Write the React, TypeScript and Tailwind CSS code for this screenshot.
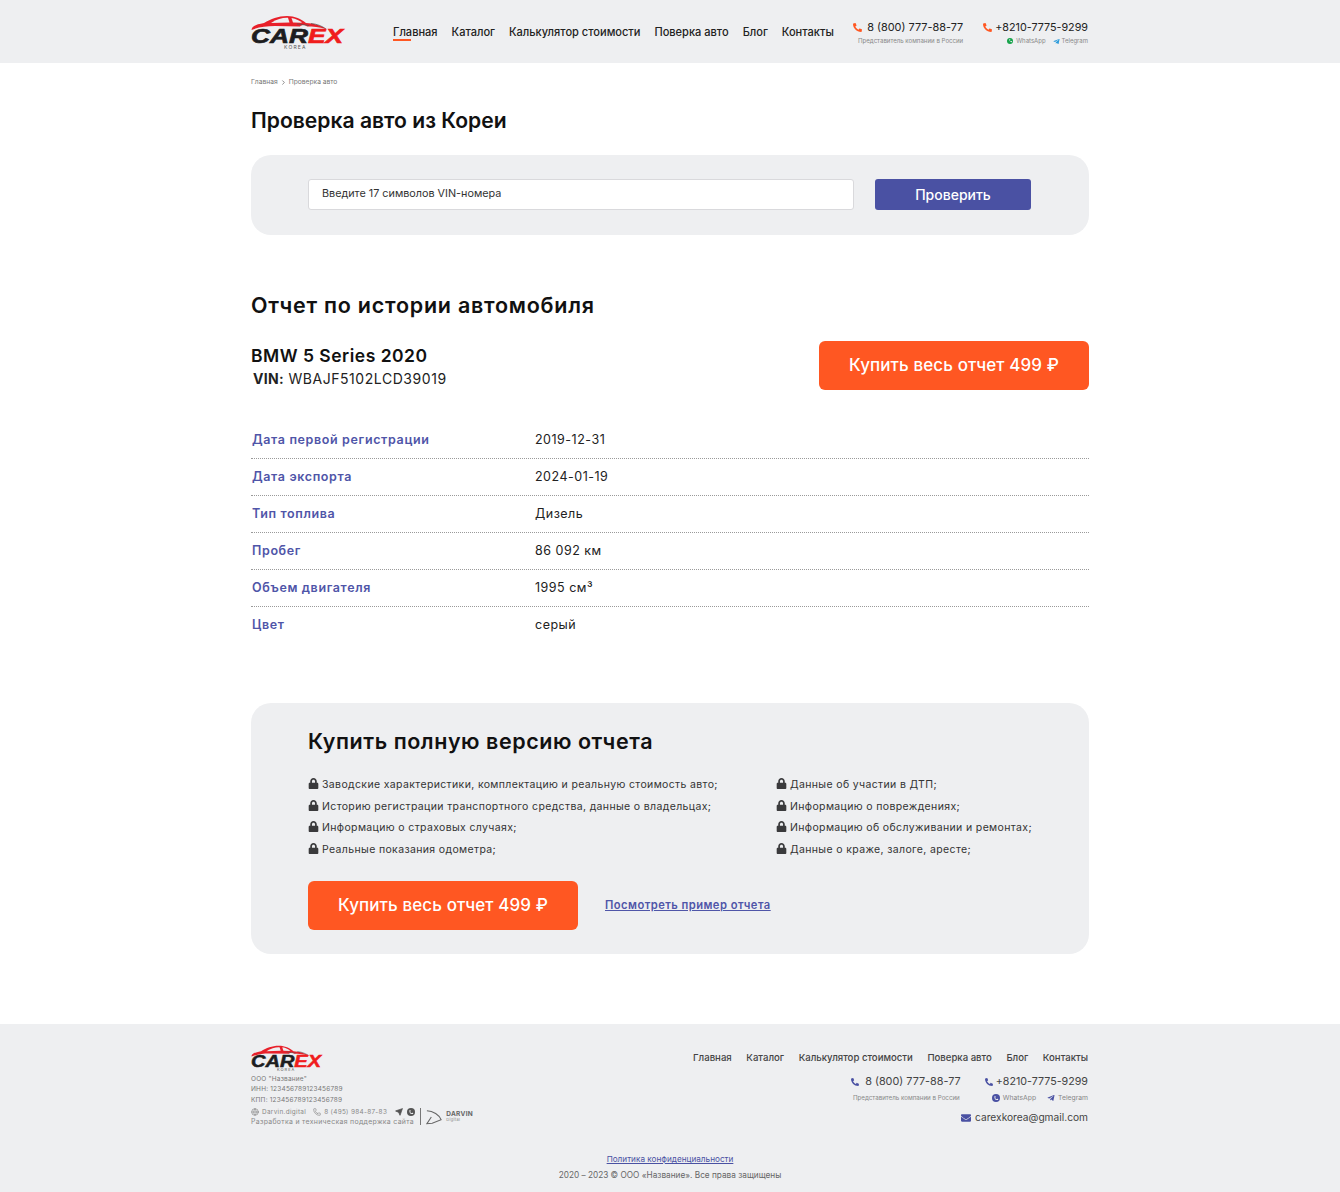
import { Phone, Send, Globe, ChevronRight } from "lucide-react";
import { FaLock, FaEnvelope, FaPhone, FaTelegramPlane } from "react-icons/fa";

const navItems = ["Главная", "Каталог", "Калькулятор стоимости", "Поверка авто", "Блог", "Контакты"];

const rows = [
  ["Дата первой регистрации", "2019-12-31"],
  ["Дата экспорта", "2024-01-19"],
  ["Тип топлива", "Дизель"],
  ["Пробег", "86 092 км"],
  ["Объем двигателя", "1995 см³"],
  ["Цвет", "серый"],
];

const leftItems = [
  "Заводские характеристики, комплектацию и реальную стоимость авто;",
  "Историю регистрации транспортного средства, данные о владельцах;",
  "Информацию о страховых случаях;",
  "Реальные показания одометра;",
];

const rightItems = [
  "Данные об участии в ДТП;",
  "Информацию о повреждениях;",
  "Информацию об обслуживании и ремонтах;",
  "Данные о краже, залоге, аресте;",
];

function Logo({ small }: { small?: boolean }) {
  return (
    <div className={small ? "relative h-[26px] w-[71px] shrink-0" : "relative h-[33px] w-[92px] shrink-0"}>
      <svg viewBox="0 0 92 20" className="absolute top-0 left-0 w-full" fill="none">
        <path
          d="M0.5 15C1 11 5 9.5 13 8C20 4 27 1 36 1C44 1 50 4 55 8C62 8.5 70 10 75 14C68 12 62 11.5 56 11.5C54 9.5 51 9.5 49 11.5L24 11C15 11 8 12 0.5 15Z"
          fill="#e8202a"
        />
        <path d="M20 8C26 4 32 2.5 37 2.8L38.5 7.5Z" fill="#eeeff1" />
        <path d="M40.5 3C45 3.5 49 6 51 7.8L42 7.5Z" fill="#eeeff1" />
        <path d="M46 9L58 10.5M60 8.5C66 9 71 11 75 14" stroke="#555" strokeWidth="0.7" />
      </svg>
      <div
        className={
          small
            ? "absolute top-[11px] left-0 flex origin-left scale-x-[1.25] text-[16px] leading-[12px] font-bold italic [-webkit-text-stroke:0.5px_currentColor]"
            : "absolute top-[13px] left-0 flex origin-left scale-x-[1.25] text-[21px] leading-[16px] font-bold italic [-webkit-text-stroke:0.7px_currentColor]"
        }
        style={{ fontFamily: "'Liberation Sans', sans-serif" }}
      >
        <span className="text-[#1d1d1f]">CAR</span>
        <span className="text-[#f01d1d]">EX</span>
      </div>
      <div
        className={
          small
            ? "absolute top-[23px] left-[26px] text-[4px] leading-[4px] tracking-[1px] text-[#555]"
            : "absolute top-[30px] left-[33px] text-[5px] leading-[5px] tracking-[1.2px] text-[#555]"
        }
      >
        KOREA
      </div>
    </div>
  );
}

// круглая иконка WhatsApp, залитая цветом, как на макете
function WaIcon({ className }: { className: string }) {
  return (
    <span className={`flex items-center justify-center rounded-full ${className}`}>
      <FaPhone className="size-[55%] -scale-x-100 text-[#eeeff1]" />
    </span>
  );
}

function BuyButton() {
  return (
    <button className="h-[49px] w-[270px] rounded-[6px] bg-[#ff5722] text-[17px] font-medium tracking-[0.1px] text-white">
      Купить весь отчет 499 ₽
    </button>
  );
}

function LockRow({ text }: { text: string }) {
  return (
    <li className="flex h-[21.6px] items-center gap-[3px] text-[10.5px] tracking-[0.36px] whitespace-nowrap text-[#333]">
      <FaLock className="relative -top-[1px] size-[11px] text-[#3a3a3c]" />
      <span>{text}</span>
    </li>
  );
}

export default function App() {
  return (
    <div className="min-h-[1192px] bg-white text-[#1c1c1e]" style={{ fontFamily: "Inter, sans-serif" }}>
      <header className="h-[63px] bg-[#eeeff1]">
        <div className="mx-auto flex w-[838px] pt-[15px] pr-px">
          <Logo />
          <nav className="mt-[9px] ml-[50px] flex h-[20px] gap-[14px] text-[11.05px] font-medium whitespace-nowrap text-[#222]">
            {navItems.map((item, i) => (
              <a key={item} className="relative">
                {item}
                {i === 0 && <span className="absolute top-[15px] left-0 h-[2px] w-[18px] bg-[#ff5722]" />}
              </a>
            ))}
          </nav>
          <div className="mt-[5px] ml-auto flex shrink-0 flex-col items-end whitespace-nowrap">
            <div className="flex items-center gap-[5px] text-[10.9px] leading-[15px] text-[#222]">
              <FaPhone className="size-[9px] -scale-x-100 text-[#ff5722]" />
              <span>8 (800) 777-88-77</span>
            </div>
            <div className="mt-[2px] text-[6.1px] leading-[8px] text-[#888]">Представитель компании в России</div>
          </div>
          <div className="mt-[5px] ml-[20px] flex shrink-0 flex-col items-end whitespace-nowrap">
            <div className="flex items-center gap-[3px] text-[10.76px] leading-[15px] text-[#222]">
              <FaPhone className="size-[9px] -scale-x-100 text-[#ff5722]" />
              <span>+8210-7775-9299</span>
            </div>
            <div className="mt-[2px] flex items-center gap-[7px] text-[6px] leading-[8px] text-[#888]">
              <span className="flex items-center gap-[3px]">
                <WaIcon className="size-[6px] bg-[#16a34a]" /> WhatsApp
              </span>
              <span className="flex items-center gap-[2px]">
                <FaTelegramPlane className="size-[7px] text-[#2d9cdb]" /> Telegram
              </span>
            </div>
          </div>
        </div>
      </header>

      <main className="mx-auto w-[838px]">
        <div className="flex items-center gap-[2px] pt-[14px] text-[6.7px] leading-[10px] text-[#777]">
          Главная <ChevronRight className="size-[7px] text-[#444]" strokeWidth={2} /> Проверка авто
        </div>
        <h1 className="mt-[20px] text-[21.1px] leading-[28px] font-semibold text-[#111]">Проверка авто из Кореи</h1>

        <div className="mt-[20px] flex h-[80px] items-start rounded-[20px] bg-[#eeeff1] pt-[24px] pr-[57px] pl-[57px]">
          <div className="flex h-[31px] w-[546px] items-center rounded-[3px] border border-[#d9d9dc] bg-white pl-[13px] text-[10.8px] text-[#333]">
            Введите 17 символов VIN-номера
          </div>
          <button className="ml-[21px] h-[31px] w-[156px] rounded-[3px] bg-[#4a51a3] text-[14px] font-medium text-white">
            Проверить
          </button>
        </div>

        <h2 className="mt-[56px] text-[21.5px] leading-[28px] font-semibold tracking-[0.75px] text-[#111]">
          Отчет по истории автомобиля
        </h2>

        <div className="mt-[22px] flex items-start justify-between">
          <div className="pt-[3px]">
            <div className="text-[17.5px] leading-[24px] font-semibold tracking-[0.5px] text-[#111]">BMW 5 Series 2020</div>
            <div className="mt-[2px] pl-[2px] text-[14px] leading-[18px] tracking-[0.55px] text-[#222]">
              <span className="font-bold tracking-[0.3px]">VIN:</span> WBAJF5102LCD39019
            </div>
          </div>
          <BuyButton />
        </div>

        <div className="mt-[32px]">
          {rows.map(([label, value], i) => (
            <div
              key={label}
              className={`flex h-[37px] items-center ${i < rows.length - 1 ? "border-b border-dotted border-[#9a9a9a]" : ""}`}
            >
              <div className="w-[284px] pl-[1px] text-[12.5px] font-semibold tracking-[0.63px] text-[#4f55a8]">{label}</div>
              <div className="text-[12.5px] tracking-[0.5px] text-[#222]">{value}</div>
            </div>
          ))}
        </div>

        <section className="mt-[59px] h-[251px] rounded-[20px] bg-[#eeeff1] pt-[24px] pl-[57px]">
          <h2 className="text-[21.5px] leading-[28px] font-semibold tracking-[0.55px] text-[#111]">
            Купить полную версию отчета
          </h2>
          <div className="mt-[19px] flex">
            <ul className="w-[468px]">
              {leftItems.map((t) => (
                <LockRow key={t} text={t} />
              ))}
            </ul>
            <ul>
              {rightItems.map((t) => (
                <LockRow key={t} text={t} />
              ))}
            </ul>
          </div>
          <div className="mt-[21px] flex items-center">
            <BuyButton />
            <a className="ml-[27px] text-[11.2px] font-semibold tracking-[0.45px] text-[#4f55a8] underline">
              Посмотреть пример отчета
            </a>
          </div>
        </section>
      </main>

      <footer className="mt-[70px] h-[168px] bg-[#eeeff1]">
        <div className="mx-auto flex w-[838px] justify-between pt-[21px] pr-px">
          <div>
            <Logo small />
            <div className="mt-[3px] text-[6.5px] leading-[10.3px] tracking-[0.2px] text-[#777]">
              <div>ООО "Название"</div>
              <div>ИНН: 123456789123456789</div>
              <div>КПП: 123456789123456789</div>
            </div>
            <div className="mt-[2px] flex items-center text-[6.9px] leading-[10px] tracking-[0.32px] whitespace-nowrap text-[#888]">
              <div>
                <div className="flex items-center gap-[3px] text-[6.4px]">
                  <Globe className="size-[8px]" />
                  Darvin.digital
                  <Phone className="ml-[4px] size-[8px]" />
                  8 (495) 984-87-83
                  <Send className="ml-[5px] size-[8px] fill-[#555] text-[#555]" />
                  <WaIcon className="ml-[1px] size-[8px] bg-[#555]" />
                </div>
                <div>Разработка и техническая поддержка сайта</div>
              </div>
              <div className="mr-[5px] ml-[5px] h-[17px] w-px bg-[#777]" />
              <svg viewBox="0 0 18 16" className="h-[16px] w-[16px]" fill="none" stroke="#666" strokeWidth="1.2">
                <path d="M1 1C8 1 15 6 17 11L7 15L1 15.5L6 8" />
              </svg>
              <div className="ml-[4px]">
                <div className="text-[6.5px] leading-[7px] font-bold tracking-[0.3px] text-[#666]">DARVIN</div>
                <div className="text-[4px] leading-[4px]">Digital</div>
              </div>
            </div>
          </div>

          <div className="flex flex-col items-end pt-[6px]">
            <nav className="flex gap-[14.6px] text-[9.6px] leading-[14px] font-medium whitespace-nowrap text-[#444]">
              {navItems.map((item) => (
                <a key={item}>{item}</a>
              ))}
            </nav>
            <div className="mt-[9px] flex whitespace-nowrap">
              <div className="flex flex-col items-end">
                <div className="flex items-center gap-[6px] text-[10.85px] leading-[15px] text-[#444]">
                  <FaPhone className="size-[8px] -scale-x-100 text-[#4a51a3]" />
                  8 (800) 777-88-77
                </div>
                <div className="mt-[5px] mr-px text-[6.2px] leading-[8px] text-[#888]">Представитель компании в России</div>
              </div>
              <div className="ml-[24px] flex flex-col items-end">
                <div className="flex items-center gap-[3px] text-[10.7px] leading-[15px] text-[#444]">
                  <FaPhone className="size-[8px] -scale-x-100 text-[#4a51a3]" />
                  +8210-7775-9299
                </div>
                <div className="mt-[5px] flex items-center gap-[11px] text-[6.8px] leading-[8px] text-[#888]">
                  <span className="flex items-center gap-[3px]">
                    <WaIcon className="size-[8px] bg-[#4a51a3]" /> WhatsApp
                  </span>
                  <span className="flex items-center gap-[3px]">
                    <FaTelegramPlane className="size-[8px] text-[#4a51a3]" /> Telegram
                  </span>
                </div>
              </div>
            </div>
            <div className="mt-[8px] flex items-center gap-[4px] text-[10.2px] leading-[15px] text-[#444]">
              <FaEnvelope className="size-[10px] text-[#4a51a3]" />
              carexkorea@gmail.com
            </div>
          </div>
        </div>
        <div className="mt-[26px] text-center text-[8.2px] leading-[12px] text-[#666]">
          <a className="text-[#4a51a3] underline">Политика конфиденциальности</a>
          <div className="mt-[4px] text-[8.25px]">2020 – 2023 © ООО «Название». Все права защищены</div>
        </div>
      </footer>
    </div>
  );
}
